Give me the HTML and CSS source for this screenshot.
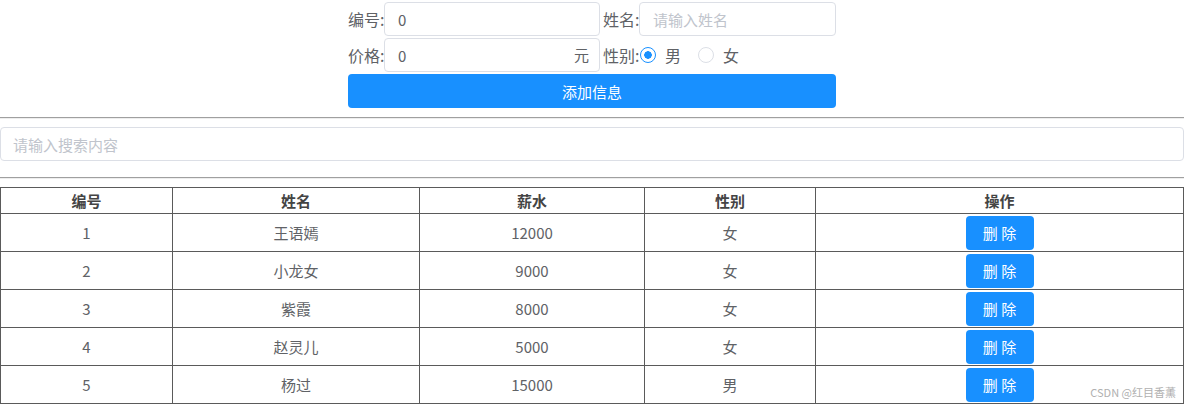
FILE: index.html
```html
<!DOCTYPE html>
<html lang="zh-CN">
<head>
    <meta charset="UTF-8">
    <title>信息管理</title>
    <link rel="stylesheet" href="styles.css">
</head>
<body>
    <div class="form">
        <div class="form-row">
            <label class="label">编号:</label>
            <div class="input-wrap wide"><input class="input" type="text" value="0"></div>
            <label class="label">姓名:</label>
            <div class="input-wrap"><input class="input" type="text" placeholder="请输入姓名"></div>
        </div>
        <div class="form-row">
            <label class="label">价格:</label>
            <div class="input-wrap wide">
                <input class="input" type="text" value="0">
                <span class="suffix">元</span>
            </div>
            <label class="label">性别:</label>
            <div class="radios">
                <span class="radio checked"><span class="dot"></span>男</span>
                <span class="radio"><span class="dot"></span>女</span>
            </div>
        </div>
        <button class="add-btn">添加信息</button>
    </div>

    <hr class="rule-top">
    <input class="search" type="text" placeholder="请输入搜索内容">
    <hr class="rule-bottom">

    <div class="table-wrap">
        <table class="list">
            <colgroup>
                <col style="width: 172px">
                <col style="width: 247px">
                <col style="width: 225px">
                <col style="width: 171px">
                <col>
            </colgroup>
            <thead>
                <tr><th>编号</th><th>姓名</th><th>薪水</th><th>性别</th><th>操作</th></tr>
            </thead>
            <tbody id="rows"></tbody>
        </table>
        <div class="watermark">CSDN @红目香薰</div>
    </div>

    <script>
        var people = [
            { id: 1, name: '王语嫣', salary: 12000, sex: '女' },
            { id: 2, name: '小龙女', salary: 9000, sex: '女' },
            { id: 3, name: '紫霞', salary: 8000, sex: '女' },
            { id: 4, name: '赵灵儿', salary: 5000, sex: '女' },
            { id: 5, name: '杨过', salary: 15000, sex: '男' }
        ];
        var tbody = document.getElementById('rows');
        people.forEach(function (p) {
            var tr = document.createElement('tr');
            tr.innerHTML = '<td>' + p.id + '</td><td>' + p.name + '</td><td>' + p.salary +
                '</td><td>' + p.sex + '</td><td><button class="del-btn">删 除</button></td>';
            tbody.appendChild(tr);
        });
    </script>
</body>
</html>
```

FILE: styles.css
```css
body {
    margin: 0;
    font-family: "Noto Sans CJK SC", "Noto Sans", sans-serif;
    color: #606266;
    background-color: #fff;
}

.form {
    width: 488px;
    margin: 2px auto 0;
}

.form-row {
    display: flex;
    align-items: center;
    height: 34px;
    margin-bottom: 2px;
}

.label {
    font-size: 16px;
    color: #606266;
    width: 36px;
    flex-shrink: 0;
    white-space: nowrap;
}

.input-wrap {
    position: relative;
    flex: 1;
    height: 34px;
}

.input-wrap.wide {
    flex: none;
    width: 216px;
    margin-right: 3px;
}

.input {
    box-sizing: border-box;
    width: 100%;
    height: 34px;
    border: 1px solid #dcdfe6;
    border-radius: 4px;
    padding: 0 13px;
    font-family: inherit;
    font-size: 15px;
    color: #606266;
    outline: none;
}

.input::placeholder,
.search::placeholder {
    color: #c0c4cc;
}

.suffix {
    position: absolute;
    right: 11px;
    top: 6px;
    font-size: 15px;
    color: #606266;
}

.radios {
    display: flex;
    align-items: center;
    flex: 1;
    padding-left: 1px;
}

.radio {
    display: flex;
    align-items: center;
    font-size: 16px;
    color: #606266;
    margin-right: 17px;
}

.radio .dot {
    box-sizing: border-box;
    width: 16px;
    height: 16px;
    border: 1px solid #dcdfe6;
    border-radius: 50%;
    margin-right: 9px;
    background-color: #fff;
}

.radio.checked .dot {
    border-color: #1890ff;
    background: radial-gradient(circle, #1890ff 0 3.5px, #fff 4px);
}

.add-btn {
    display: block;
    width: 100%;
    height: 34px;
    border: none;
    border-radius: 4px;
    background-color: #1890ff;
    color: #fff;
    font-family: inherit;
    font-size: 15px;
    cursor: pointer;
}

hr {
    border: none;
    border-top: 1px solid #a0a0a0;
    border-bottom: 1px solid #eee;
}

.rule-top {
    margin: 9px 0 8px;
}

.rule-bottom {
    margin: 16px 0 8px;
}

.search {
    display: block;
    box-sizing: border-box;
    width: 100%;
    height: 34px;
    border: 1px solid #dcdfe6;
    border-radius: 4px;
    padding: 0 12px;
    font-family: inherit;
    font-size: 15px;
    color: #606266;
    outline: none;
}

.table-wrap {
    position: relative;
    margin-top: 8px;
}

.list {
    width: 100%;
    border-collapse: collapse;
    table-layout: fixed;
    font-size: 15px;
}

.list th,
.list td {
    border: 1px solid #5a5a5a;
    text-align: center;
    padding: 0;
}

.list th {
    height: 25px;
    color: #444;
    font-weight: bold;
}

.list td {
    height: 37px;
    color: #606266;
}

.del-btn {
    width: 68px;
    height: 34px;
    border: none;
    border-radius: 4px;
    background-color: #1890ff;
    color: #fff;
    font-family: inherit;
    font-size: 15px;
    vertical-align: middle;
    cursor: pointer;
}

.watermark {
    position: absolute;
    right: 8px;
    bottom: 4px;
    font-size: 11px;
    color: #b0b0b0;
}
```
